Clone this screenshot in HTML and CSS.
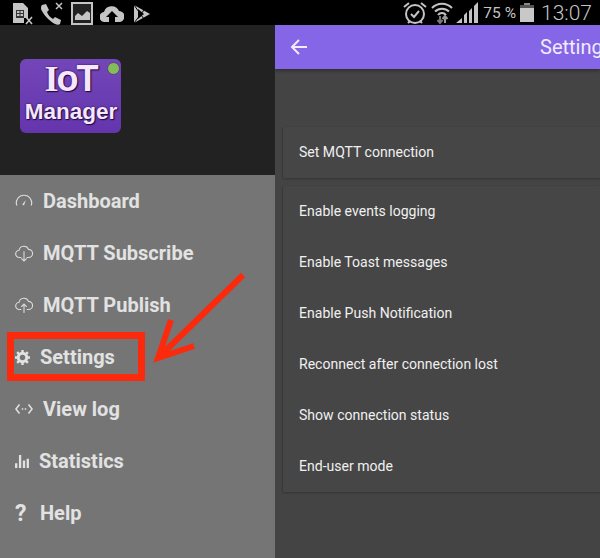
FILE: index.html
```html
<!DOCTYPE html>
<html lang="en">
<head>
  <meta charset="UTF-8" />
  <title>IoT Manager</title>
  <link rel="stylesheet" href="styles.css">
</head>
<body>
  <div class="status-bar">
    <div class="status-left">
      <svg width="20" height="24" viewBox="0 0 20 24"><path d="M0 2h10l5 5v10H11v5H0z" fill="#c4c4c4"/><path d="M3 9h8v8H3z" fill="#333"/><path d="M4 10h2.500v2H4zM7.500 10H10v2H7.500zM4 13h2.500v2H4zM7.500 13H10v2H7.500z" fill="#c4c4c4"/><path d="M13 16l6 7M19 16l-6 7" stroke="#c4c4c4" stroke-width="1.6"/></svg>
      <svg width="24" height="24" viewBox="0 0 24 24"><path d="M2 4l4-1 3 6-2 2c1 3 3 5 6 7l2-2 6 3-1 4c-1 1-3 1-5 0C9 20 3 13 1 8c0-2 0-3 1-4z" fill="#c4c4c4"/><path d="M16 2l6 6M22 2l-6 6" stroke="#c4c4c4" stroke-width="1.5"/></svg>
      <svg width="22" height="24" viewBox="0 0 22 24"><path d="M1 2h20v21H1z" fill="#222" stroke="#c4c4c4" stroke-width="2"/><path d="M4 19v-4l3-3 4 3 5-5 3 2v7z" fill="#c4c4c4"/></svg>
      <svg width="24" height="24" viewBox="0 0 24 24"><path d="M5 21a5 5 0 0 1-1-10 8 8 0 0 1 15-1 5.500 5.500 0 0 1 0 11h-4v-5h3l-6-6-6 6h3v5z" fill="#c4c4c4"/></svg>
      <svg class="st-last" width="18" height="24" viewBox="0 0 18 24"><path d="M1 4l16 9-16 9z" fill="#c4c4c4"/><path d="M5 8l6 5-6 5z" fill="#000"/><path d="M1 22L11 9M1 4l10 14" stroke="#000" stroke-width="1"/></svg>
    </div>
    <div class="status-right">
      <svg width="24" height="24" viewBox="0 0 24 24"><circle cx="12" cy="13" r="9" fill="none" stroke="#c4c4c4" stroke-width="2"/><path d="M8 13l3 3 5-6" fill="none" stroke="#c4c4c4" stroke-width="2"/><path d="M1 6l5-4M23 6l-5-4M5 22l2-2M19 22l-2-2" stroke="#c4c4c4" stroke-width="2"/></svg>
      <svg width="22" height="24" viewBox="0 0 22 24"><path d="M1 7a14 14 0 0 1 20 0M4 10.500a10 10 0 0 1 14 0M7 14a5 5 0 0 1 8 0" fill="none" stroke="#c4c4c4" stroke-width="2"/><path d="M9 15v7M6.500 19L9 22l2.500-3" stroke="#777" stroke-width="2" fill="none"/><path d="M14 22v-7M11.500 18L14 15l2.500 3" stroke="#999" stroke-width="2" fill="none"/></svg>
      <svg class="signal" width="24" height="24" viewBox="0 0 24 24"><path d="M1 22l6-5v5zM9 22v-8l3-3v11zM14 22V10l3-3v15zM19 22V5l4-4v21z" fill="#c4c4c4"/></svg>
      <span class="battery-text">75 %</span>
      <div class="battery"><div class="battery-fill"></div></div>
      <span class="clock">13:07</span>
    </div>
  </div>

  <div class="app">
    <aside class="drawer">
      <div class="drawer-head">
        <div class="logo">
          <span class="logo-dot"></span>
          <span class="logo-iot"><span class="logo-i">I</span>oT</span>
          <span class="logo-name">Manager</span>
        </div>
      </div>
      <nav class="menu">
        <div class="menu-item">
          <svg class="menu-icon" viewBox="0 0 20 20"><path d="M2 15a8.500 8.500 0 1 1 16 0" fill="none" stroke="#dcdcdc" stroke-width="1.300"/><path d="M8 14l4-5-2 6z" fill="#dcdcdc"/></svg>
          <span class="menu-text">Dashboard</span>
        </div>
        <div class="menu-item">
          <svg class="menu-icon" viewBox="0 0 20 20"><path d="M7 15H5a4 4 0 0 1-.5-8 5.500 5.500 0 0 1 10.500-1 4.500 4.500 0 0 1 0 9h-2" fill="none" stroke="#dcdcdc" stroke-width="1.200"/><path d="M10 8v11M7 16l3 3 3-3" fill="none" stroke="#dcdcdc" stroke-width="1.200"/></svg>
          <span class="menu-text">MQTT Subscribe</span>
        </div>
        <div class="menu-item">
          <svg class="menu-icon" viewBox="0 0 20 20"><path d="M7 15H5a4 4 0 0 1-.5-8 5.500 5.500 0 0 1 10.500-1 4.500 4.500 0 0 1 0 9h-2" fill="none" stroke="#dcdcdc" stroke-width="1.200"/><path d="M10 19V9M7 12l3-3 3 3" fill="none" stroke="#dcdcdc" stroke-width="1.200"/></svg>
          <span class="menu-text">MQTT Publish</span>
        </div>
        <div class="menu-item">
          <svg class="menu-icon small" viewBox="0 0 16 16"><circle cx="8" cy="8" r="4.500" fill="none" stroke="#e2e2e2" stroke-width="3.200"/><path d="M8 0v3M8 13v3M0 8h3M13 8h3M2.300 2.300l2 2M11.700 11.700l2 2M2.300 13.700l2-2M11.700 4.300l2-2" stroke="#e2e2e2" stroke-width="2.600"/></svg>
          <span class="menu-text">Settings</span>
        </div>
        <div class="menu-item">
          <svg class="menu-icon" viewBox="0 0 20 20"><path d="M5 5l-4 5 4 5M15 5l4 5-4 5" fill="none" stroke="#e2e2e2" stroke-width="1.700"/><path d="M7.500 9.200h1.700v1.700H7.500zM10.800 9.200h1.700v1.700h-1.700z" fill="#e2e2e2"/></svg>
          <span class="menu-text">View log</span>
        </div>
        <div class="menu-item">
          <svg class="menu-icon narrow" viewBox="0 0 15 14"><path d="M0 9h2.500v5H0zM4.200 0h2.500v14H4.200zM8.400 6h2.500v8H8.400zM12.500 4H15v10h-2.500z" fill="#e2e2e2"/></svg>
          <span class="menu-text">Statistics</span>
        </div>
        <div class="menu-item">
          <span class="help-mark">?</span>
          <span class="menu-text">Help</span>
        </div>
      </nav>
    </aside>

    <main class="content">
      <header class="toolbar">
        <svg width="18" height="16" viewBox="0 0 18 16"><path d="M17 8H2M9 1L2 8l7 7" fill="none" stroke="#f1ecfd" stroke-width="2"/></svg>
        <span class="toolbar-title">Settings</span>
      </header>
      <div class="card card-first">
        <div class="row">Set MQTT connection</div>
      </div>
      <div class="card">
        <div class="row">Enable events logging</div>
        <div class="row">Enable Toast messages</div>
        <div class="row">Enable Push Notification</div>
        <div class="row">Reconnect after connection lost</div>
        <div class="row">Show connection status</div>
        <div class="row">End-user mode</div>
      </div>
    </main>
  </div>

  <!-- annotation drawn on top of the screenshot -->
  <div class="mark-box"></div>
  <svg class="mark-arrow" width="110" height="100" viewBox="0 0 110 100"><path d="M97 5L12 88M25 50L12 88 48 76" fill="none" stroke="#fb2a0c" stroke-width="6"/></svg>
</body>
</html>
```

FILE: styles.css
```css
html, body {
  margin: 0;
  height: 100%;
  overflow: hidden;
}

body {
  position: relative;
  width: 600px;
  height: 558px;
  font-family: Roboto, sans-serif;
  background: #444;
}

.status-bar {
  height: 25px;
  background: #000;
  display: flex;
  justify-content: space-between;
  align-items: center;
  overflow: hidden;
}

.status-left {
  display: flex;
  align-items: center;
  gap: 7px;
  padding-left: 13px;
}

.st-last {
  margin-left: 2px;
}

.status-right {
  display: flex;
  align-items: center;
  gap: 4px;
  padding-right: 8px;
  color: #c4c4c4;
}

.signal {
  margin-left: -2px;
}

.battery-text {
  font-size: 15.500px;
  white-space: nowrap;
}

.battery {
  width: 14px;
  height: 17px;
  margin-top: 2px;
  background: #c8c8c8;
  position: relative;
}

.battery::before {
  content: "";
  position: absolute;
  top: -2px;
  left: 4px;
  width: 6px;
  height: 2px;
  background: #888;
}

.battery-fill {
  height: 3px;
  background: #555;
}

.clock {
  font-size: 21px;
  font-weight: 300;
  margin-left: 3px;
}

.app {
  display: flex;
  height: 533px;
}

.drawer {
  width: 275px;
  flex: none;
  display: flex;
  flex-direction: column;
}

.drawer-head {
  height: 150px;
  background: #222;
  padding: 34px 0 0 20px;
  box-sizing: border-box;
}

.logo {
  position: relative;
  width: 101px;
  height: 74px;
  border-radius: 6px;
  background: linear-gradient(to bottom, #7346b8, #6435ad);
  display: flex;
  flex-direction: column;
  align-items: center;
  color: #f6e6ff;
  font-family: "Liberation Sans", sans-serif;
  font-weight: bold;
  text-shadow: 0 0 2px #1e0c3c, 1px 1px 1px #1e0c3c;
}

.logo-dot {
  position: absolute;
  top: 3px;
  right: 1px;
  width: 11px;
  height: 11px;
  border-radius: 50%;
  background: #83bd57;
  border: 1px solid #5d3a90;
}

.logo-iot {
  font-size: 36px;
  line-height: 40px;
  letter-spacing: -2px;
}

.logo-i {
  font-family: "Liberation Serif", serif;
}

.logo-name {
  font-size: 22.500px;
  line-height: 26px;
  padding-left: 1px;
}

.menu {
  flex: 1;
  background: #757575;
}

.menu-item {
  height: 52px;
  display: flex;
  align-items: center;
  padding-left: 15px;
}

.menu-icon {
  width: 18px;
  height: 18px;
  margin-right: 10px;
  flex: none;
}

.menu-icon.small {
  width: 15px;
  height: 15px;
}

.menu-icon.narrow {
  width: 14px;
  height: 13px;
}

.help-mark {
  width: 15px;
  margin-right: 10px;
  color: #e2e2e2;
  font-size: 23px;
  font-weight: bold;
}

.menu-text {
  color: #e2e2e2;
  font-size: 20px;
  font-weight: bold;
}

.content {
  flex: 1;
  min-width: 0;
  background: #444;
  overflow: hidden;
}

.toolbar {
  height: 44px;
  background: #8566e6;
  box-shadow: 0 2px 3px rgba(0, 0, 0, 0.3);
  display: flex;
  align-items: center;
  padding-left: 15px;
  position: relative;
}

.toolbar-title {
  position: absolute;
  left: 265px;
  color: #f1ecfd;
  font-size: 20px;
  white-space: nowrap;
}

.card {
  margin: 8px 0 0 8px;
  background: #464646;
  box-shadow: 0 1px 2px rgba(0, 0, 0, 0.22), -1px 0 1px rgba(0, 0, 0, 0.08);
}

.card-first {
  margin-top: 58px;
}

.row {
  height: 51px;
  line-height: 51px;
  padding-left: 16px;
  color: #f0f0f0;
  font-size: 14.050px;
}

.mark-box {
  position: absolute;
  left: 7px;
  top: 332px;
  width: 124px;
  height: 35px;
  border: 7px solid #fb2a0c;
}

.mark-arrow {
  position: absolute;
  left: 146px;
  top: 270px;
}
```
